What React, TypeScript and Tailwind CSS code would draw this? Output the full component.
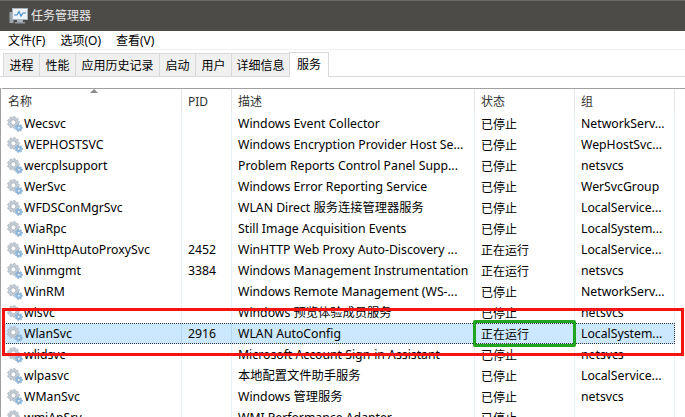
const TABS = [
  { label: "进程", w: "w-[36px]" },
  { label: "性能", w: "w-[36px]" },
  { label: "应用历史记录", w: "w-[84px]" },
  { label: "启动", w: "w-[36px]" },
  { label: "用户", w: "w-[36px]" },
  { label: "详细信息", w: "w-[58px]" },
]

const MENU = ["文件(F)", "选项(O)", "查看(V)"]

interface Service {
  name: string
  pid?: string
  desc: string
  status: string
  group: string
  selected?: boolean
}

const STOPPED = "已停止"
const RUNNING = "正在运行"

const SERVICES: Service[] = [
  { name: "Wecsvc", desc: "Windows Event Collector", status: STOPPED, group: "NetworkServ..." },
  { name: "WEPHOSTSVC", desc: "Windows Encryption Provider Host Se...", status: STOPPED, group: "WepHostSvc..." },
  { name: "wercplsupport", desc: "Problem Reports Control Panel Supp...", status: STOPPED, group: "netsvcs" },
  { name: "WerSvc", desc: "Windows Error Reporting Service", status: STOPPED, group: "WerSvcGroup" },
  { name: "WFDSConMgrSvc", desc: "WLAN Direct 服务连接管理器服务", status: STOPPED, group: "LocalService..." },
  { name: "WiaRpc", desc: "Still Image Acquisition Events", status: STOPPED, group: "LocalSystem..." },
  { name: "WinHttpAutoProxySvc", pid: "2452", desc: "WinHTTP Web Proxy Auto-Discovery ...", status: RUNNING, group: "LocalService..." },
  { name: "Winmgmt", pid: "3384", desc: "Windows Management Instrumentation", status: RUNNING, group: "netsvcs" },
  { name: "WinRM", desc: "Windows Remote Management (WS-...", status: STOPPED, group: "NetworkServ..." },
  { name: "wisvc", desc: "Windows 预览体验成员服务", status: STOPPED, group: "netsvcs" },
  { name: "WlanSvc", pid: "2916", desc: "WLAN AutoConfig", status: RUNNING, group: "LocalSystem...", selected: true },
  { name: "wlidsvc", desc: "Microsoft Account Sign-in Assistant", status: STOPPED, group: "netsvcs" },
  { name: "wlpasvc", desc: "本地配置文件助手服务", status: STOPPED, group: "LocalService..." },
  { name: "WManSvc", desc: "Windows 管理服务", status: STOPPED, group: "netsvcs" },
  { name: "wmiApSrv", desc: "WMI Performance Adapter", status: STOPPED, group: "" },
]

function gearPath(cx: number, cy: number, outer: number, inner: number, teeth: number) {
  const pts: string[] = []
  const step = (Math.PI * 2) / teeth
  for (let i = 0; i < teeth; i++) {
    const a = i * step
    const corners: [number, number][] = [
      [a - step * 0.42, inner],
      [a - step * 0.2, outer],
      [a + step * 0.2, outer],
      [a + step * 0.42, inner],
    ]
    for (const [ang, r] of corners) {
      pts.push(`${(cx + Math.cos(ang) * r).toFixed(2)} ${(cy + Math.sin(ang) * r).toFixed(2)}`)
    }
  }
  return `M${pts.join("L")}Z`
}

function GearIcon() {
  return (
    <svg width="16" height="16" viewBox="0 0 17 17" className="shrink-0">
      <path d={gearPath(6.8, 6.8, 6.4, 4.9, 9)} fill="#c3ccd5" stroke="#98a6b3" strokeWidth="0.5" />
      <circle cx="6.8" cy="6.8" r="2.7" fill="#ffffff" stroke="#9aa7b4" strokeWidth="0.8" />
      <path d={gearPath(12.6, 12.6, 3.9, 2.9, 7)} fill="#8fbade" stroke="#7ea3c2" strokeWidth="0.5" />
      <circle cx="12.6" cy="12.6" r="1.3" fill="#ffffff" stroke="#7ea3c2" strokeWidth="0.5" />
    </svg>
  )
}

function AppIcon() {
  return (
    <svg width="20" height="18" viewBox="0 0 20 18" className="shrink-0">
      <rect x="0.5" y="5" width="4" height="11" fill="#9aa5ad" />
      <rect x="3.5" y="1.5" width="15" height="11" fill="#eef4fa" stroke="#a9b4bd" />
      <path d="M5 8 L8 8 L10 4.5 L12 9 L14 6 L17 6" fill="none" stroke="#3c88c8" strokeWidth="1.1" />
      <rect x="8" y="13" width="6" height="2" fill="#aab3ba" />
      <rect x="6" y="15" width="10" height="1.5" fill="#8e989f" />
    </svg>
  )
}

export default function App() {
  return (
    <div
      className="relative h-[417px] w-[685px] overflow-hidden bg-white text-[12.25px] text-black"
      style={{ fontFamily: '"Noto Sans", "Noto Sans CJK SC", sans-serif' }}
    >
      {/* Title bar */}
      <div className="flex h-[31px] items-center gap-[2px] border-t border-[#6b6a68] bg-[#4d4b48] pl-[9px] text-[#e8e8e8]">
        <AppIcon />
        <span className="text-[12px]">任务管理器</span>
      </div>

      {/* Menu */}
      <div className="flex h-[18px] items-center gap-[15px] pl-[8px] pt-[2px] text-[12px] text-black">
        {MENU.map((m) => (
          <span key={m}>{m}</span>
        ))}
      </div>

      {/* Tabs */}
      <div className="h-[39px] border-t-[1px] border-[#f0f0f0]">
        <div className="flex h-[27px] items-end border-b border-[#d9d9d9] pl-[3px]">
          {TABS.map((t) => (
            <div
              key={t.label}
              className={`${t.w} flex h-[23px] shrink-0 items-center justify-center border border-b-0 border-r-0 border-[#d9d9d9] bg-[#f0f0f0] pt-[2px] text-[12px] text-black`}
            >
              {t.label}
            </div>
          ))}
          <div className="-mb-px flex h-[25px] w-[40px] shrink-0 items-center justify-center border border-b-0 border-[#d9d9d9] bg-white text-[12px] text-black">
            服务
          </div>
        </div>
      </div>

      <div className="border-l border-[#a0a0a0] pl-[1px]">
        {/* Column header */}
        <div className="relative flex h-[25px] items-center border-t border-[#a0a0a0] text-[12px] text-[#333333]">
          <span className="absolute left-[88px] top-0 h-0 w-0 border-x-[4px] border-b-[4px] border-x-transparent border-b-[#8a8a8a]" />
          <div className="flex h-full w-[180px] items-center border-r border-[#e5e5e5] pl-[6px] pt-[2px]">名称</div>
          <div className="flex h-full w-[50px] items-center border-r border-[#e5e5e5] pl-[6px] pt-[2px]">PID</div>
          <div className="flex h-full w-[243px] items-center border-r border-[#e5e5e5] pl-[6px] pt-[2px]">描述</div>
          <div className="flex h-full w-[100px] items-center border-r border-[#e5e5e5] pl-[6px] pt-[2px]">状态</div>
          <div className="flex h-full w-[100px] items-center border-r border-[#e5e5e5] pl-[6px] pt-[2px]">组</div>
        </div>

        {/* Rows */}
        {SERVICES.map((s) => (
          <div
            key={s.name}
            className={`flex h-[21px] w-[673px] items-center ${
              s.selected ? "bg-[#cce8ff] outline-1 -outline-offset-1 outline-dotted outline-[#333333]" : ""
            }`}
          >
            <div className={`flex h-full w-[180px] items-center gap-[1px] border-r pl-[5px] ${s.selected ? "border-[#b8d8f0]" : "border-[#e8f0f8]"}`}>
              <GearIcon />
              <span className="pt-[2px]">{s.name}</span>
            </div>
            <div className={`flex h-full w-[50px] items-center border-r pl-[6px] pt-[2px] ${s.selected ? "border-[#b8d8f0]" : "border-[#e8f0f8]"}`}>
              {s.pid}
            </div>
            <div className={`flex h-full w-[243px] items-center whitespace-nowrap border-r pl-[6px] pt-[2px] ${s.selected ? "border-[#b8d8f0]" : "border-[#e8f0f8]"}`}>
              {s.desc}
            </div>
            <div className={`flex h-full w-[100px] items-center border-r pl-[6px] pt-[2px] text-[12px] ${s.selected ? "border-[#b8d8f0]" : "border-[#e8f0f8]"}`}>
              {s.status}
            </div>
            <div className={`flex h-full w-[100px] items-center whitespace-nowrap pl-[6px] pt-[2px] ${s.selected ? "" : "border-r border-[#e8f0f8]"}`}>
              {s.group}
            </div>
          </div>
        ))}
      </div>

      {/* Annotation rectangles drawn over the screenshot */}
      <div className="pointer-events-none absolute left-[2px] top-[308px] h-[48px] w-[682px] border-[3px] border-[#f5140f]" />
      <div className="pointer-events-none absolute left-[473px] top-[320px] h-[27px] w-[103px] rounded-[2px] border-[3px] border-[#1fa51f]" />
    </div>
  )
}
